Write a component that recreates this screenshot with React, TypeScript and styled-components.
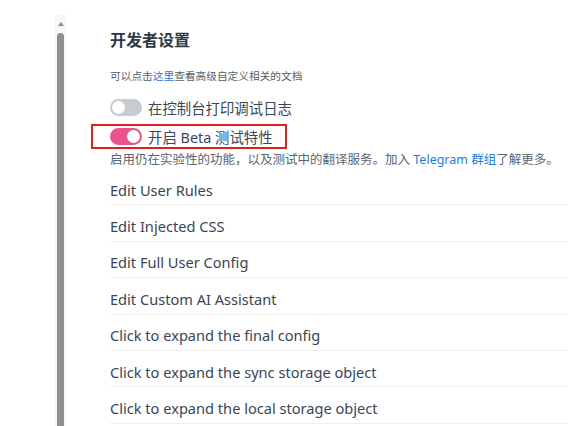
import React from "react";
import styled, { createGlobalStyle } from "styled-components";

const GlobalStyle = createGlobalStyle`
  html, body {
    margin: 0;
    padding: 0;
    background: #ffffff;
  }
  body {
    font-family: "Noto Sans", "Noto Sans CJK SC", sans-serif;
    color: #3b4756;
    overflow: hidden;
  }
`;

const Page = styled.div`
  display: flex;
  width: 568px;
  height: 426px;
  overflow: hidden;
`;

const Gutter = styled.div`
  width: 55px;
  flex-shrink: 0;
`;

const ScrollTrack = styled.div`
  width: 11px;
  margin-top: 15px;
  flex-shrink: 0;
  background: #f7f7f7;
  display: flex;
  flex-direction: column;
  align-items: center;
`;

const ScrollArrow = styled.div`
  margin-top: 7px;
  width: 0;
  height: 0;
  border-left: 3.5px solid transparent;
  border-right: 3.5px solid transparent;
  border-bottom: 4px solid #8a8a8a;
`;

const ScrollThumb = styled.div`
  margin-top: 7px;
  width: 7px;
  flex: 1;
  background: #8f8f8f;
  border-radius: 4px 4px 0 0;
`;

const Content = styled.div`
  flex: 1;
  padding: 29px 0 0 44px;
  display: flex;
  flex-direction: column;
`;

const Title = styled.h2`
  margin: 0;
  font-size: 16px;
  line-height: 22px;
  font-weight: 700;
  color: #2d3a46;
`;

const Hint = styled.p`
  margin: 17px 0 0;
  font-size: 10.7px;
  line-height: 16px;
  color: #555e68;
`;

const Link = styled.a`
  color: #1f7ae0;
  text-decoration: none;
`;

const ToggleRow = styled.div<{ $framed?: boolean }>`
  display: flex;
  align-items: center;
  gap: 6px;
  height: 25px;
  width: fit-content;
  margin-left: -19px;
  padding: 0 12px 0 17px;
  box-sizing: border-box;
  border: 2px solid ${(p) => (p.$framed ? "#e0201c" : "transparent")};
  font-size: 14.4px;
  white-space: nowrap;
  color: #3b4756;
`;

const Switch = styled.span<{ $on?: boolean }>`
  position: relative;
  width: 32px;
  height: 17px;
  border-radius: 9px;
  flex-shrink: 0;
  background: ${(p) => (p.$on ? "#e8538a" : "#c7ccd2")};

  &::after {
    content: "";
    position: absolute;
    top: 2px;
    left: ${(p) => (p.$on ? "17px" : "2px")};
    width: 13px;
    height: 13px;
    border-radius: 50%;
    background: #ffffff;
  }
`;

const Toggles = styled.div`
  margin-top: 11px;
  display: flex;
  flex-direction: column;
  gap: 4px;
`;

const Description = styled.p`
  margin: 1px 0 0;
  font-size: 12.5px;
  line-height: 20px;
  color: #5b6470;
  white-space: nowrap;
`;

const List = styled.div`
  margin-top: -1px;
  display: flex;
  flex-direction: column;
`;

const Item = styled.div`
  height: 36.4px;
  box-sizing: border-box;
  display: flex;
  align-items: center;
  padding-top: 6px;
  font-size: 14.6px;
  color: #3a4654;
  border-bottom: 1px solid #eeeeee;
`;

const items = [
  "Edit User Rules",
  "Edit Injected CSS",
  "Edit Full User Config",
  "Edit Custom AI Assistant",
  "Click to expand the final config",
  "Click to expand the sync storage object",
  "Click to expand the local storage object",
];

export default function App() {
  return (
    <>
      <GlobalStyle />
      <Page>
        <Gutter />
        <ScrollTrack>
          <ScrollArrow />
          <ScrollThumb />
        </ScrollTrack>
        <Content>
          <Title>开发者设置</Title>
          <Hint>
            可以点击<Link href="#">这里</Link>查看高级自定义相关的文档
          </Hint>
          <Toggles>
            <ToggleRow>
              <Switch />
              在控制台打印调试日志
            </ToggleRow>
            <ToggleRow $framed>
              <Switch $on />
              开启 Beta 测试特性
            </ToggleRow>
          </Toggles>
          <Description>
            启用仍在实验性的功能，以及测试中的翻译服务。加入{" "}
            <Link href="#">Telegram 群组</Link>了解更多。
          </Description>
          <List>
            {items.map((label) => (
              <Item key={label}>{label}</Item>
            ))}
          </List>
        </Content>
      </Page>
    </>
  );
}
